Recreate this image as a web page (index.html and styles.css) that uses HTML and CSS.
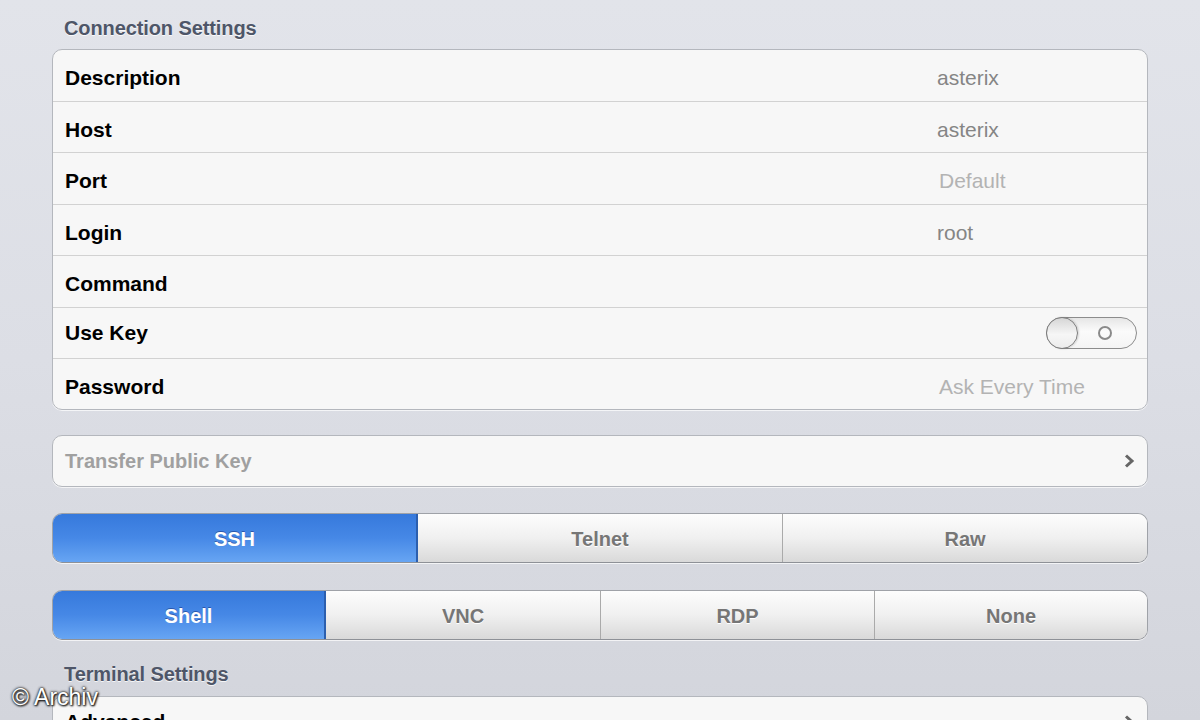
FILE: index.html
```html
<!DOCTYPE html>
<html>
<head>
<meta charset="utf-8">
<link rel="stylesheet" href="styles.css">
</head>
<body>
<div class="page">
  <div class="section-title first">Connection Settings</div>
  <div class="card">
    <div class="row"><span class="label">Description</span><span class="value">asterix</span></div>
    <div class="row"><span class="label">Host</span><span class="value">asterix</span></div>
    <div class="row"><span class="label">Port</span><span class="value placeholder">Default</span></div>
    <div class="row"><span class="label">Login</span><span class="value">root</span></div>
    <div class="row"><span class="label">Command</span><span class="value"></span></div>
    <div class="row switch-row"><span class="label">Use Key</span>
      <span class="toggle"><span class="knob"></span><span class="off-mark"></span></span>
    </div>
    <div class="row last"><span class="label">Password</span><span class="value placeholder">Ask Every Time</span></div>
  </div>

  <div class="card single">
    <div class="row link last"><span class="label muted">Transfer Public Key</span>
      <svg class="chevron" width="12" height="16" viewBox="0 0 12 16"><path d="M3 2.5 L9 8 L3 13.5" fill="none" stroke="#666" stroke-width="3"/></svg>
    </div>
  </div>

  <div class="segmented three">
    <div class="seg selected">SSH</div>
    <div class="seg">Telnet</div>
    <div class="seg">Raw</div>
  </div>

  <div class="segmented four">
    <div class="seg selected">Shell</div>
    <div class="seg">VNC</div>
    <div class="seg">RDP</div>
    <div class="seg">None</div>
  </div>

  <div class="section-title second">Terminal Settings</div>
  <div class="card">
    <div class="row link"><span class="label">Advanced</span>
      <svg class="chevron" width="12" height="16" viewBox="0 0 12 16"><path d="M3 2.5 L9 8 L3 13.5" fill="none" stroke="#666" stroke-width="3"/></svg>
    </div>
  </div>
</div>
<div class="watermark">© Archiv</div>
</body>
</html>
```

FILE: styles.css
```css
html, body {
  margin: 0;
  padding: 0;
  height: 720px;
  overflow: hidden;
}
body {
  background: linear-gradient(180deg, #e2e4ea 0%, #dcdee5 50%, #d3d5dc 100%);
  font-family: "Liberation Sans", Arial, sans-serif;
  position: relative;
}
.page {
  width: 1096px;
  margin-left: 52px;
}
.section-title {
  font-size: 20px;
  font-weight: bold;
  color: #4e5668;
  text-shadow: 0 1px 0 rgba(255,255,255,0.8);
  padding-left: 12px;
  line-height: 24px;
  letter-spacing: -0.1px;
}
.section-title.first {
  padding-top: 16px;
  padding-bottom: 9px;
}
.section-title.second {
  padding-top: 22px;
  padding-bottom: 10px;
}
.card {
  background: #f7f7f7;
  border: 1px solid #b4b7bd;
  border-radius: 10px;
  box-shadow: 0 1px 0 rgba(255,255,255,0.7);
}
.card.single {
  margin-top: 25px;
}
.row {
  box-sizing: border-box;
  height: 51.5px;
  display: grid;
  grid-template-columns: 871px 1fr;
  align-items: center;
  padding: 6px 10px 0 12px;
  border-bottom: 1px solid #d2d2d2;
}
.row.switch-row {
  padding-top: 0;
}
.row.last {
  border-bottom: none;
  height: 50px;
}
.label {
  font-size: 21px;
  font-weight: bold;
  color: #000;
}
.label.muted {
  color: #a0a0a0;
  font-size: 20px;
}
.value {
  font-size: 21px;
  color: #858585;
  padding-left: 1px;
}
.value.placeholder {
  color: #b3b3b3;
  padding-left: 3px;
}
.row.link {
  grid-template-columns: 1fr auto;
  padding-top: 0;
}
.chevron {
  display: block;
  margin-right: 2px;
}
.toggle {
  justify-self: end;
  box-sizing: border-box;
  width: 91px;
  height: 32px;
  border: 1px solid #8c8c8c;
  border-radius: 16px;
  background: linear-gradient(180deg, #e6e6e6 0%, #fbfbfb 45%, #f4f4f4 100%);
  position: relative;
}
.knob {
  position: absolute;
  left: -1px;
  top: -1px;
  width: 32px;
  height: 32px;
  box-sizing: border-box;
  border: 1px solid #7d7d7d;
  border-radius: 50%;
  background: linear-gradient(180deg, #d6d6d6 0%, #f6f6f6 55%, #ececec 100%);
  box-shadow: 1px 0 2px rgba(0,0,0,0.15);
}
.off-mark {
  position: absolute;
  left: 51px;
  top: 8px;
  width: 14px;
  height: 14px;
  box-sizing: border-box;
  border: 2px solid #8a8a8a;
  border-radius: 50%;
}
.segmented {
  display: grid;
  box-sizing: border-box;
  height: 50px;
  border: 1px solid #9fa2a8;
  border-bottom-color: #8e9197;
  border-radius: 10px;
  overflow: hidden;
  background: #e6e6e6;
  box-shadow: 0 1px 0 rgba(255,255,255,0.7);
}
.segmented.three {
  margin-top: 26px;
  grid-template-columns: 365px 364px 1fr;
}
.segmented.four {
  margin-top: 27px;
  grid-template-columns: 273px 274px 274px 1fr;
}
.seg {
  display: flex;
  align-items: center;
  justify-content: center;
  padding-top: 3px;
  font-size: 20px;
  font-weight: bold;
  color: #767676;
  text-shadow: 0 1px 0 #fff;
  background: linear-gradient(180deg, #fdfdfd 0%, #f0f0f0 50%, #d9d9d9 100%);
  border-left: 1px solid #aaaaaa;
}
.seg:first-child {
  border-left: none;
}
.seg.selected {
  color: #fff;
  text-shadow: 0 -1px 0 rgba(0,0,60,0.35);
  background: linear-gradient(180deg, #3679dc 0%, #4688e6 50%, #67a5f3 100%);
  border-right: 2px solid #2c5fae;
}
.seg.selected + .seg {
  border-left: none;
}
.watermark {
  position: absolute;
  left: 12px;
  top: 684px;
  font-size: 23px;
  color: #fff;
  text-shadow: 0 0 2px #222, 0 0 3px #222, 1px 1px 2px #000;
}
```
